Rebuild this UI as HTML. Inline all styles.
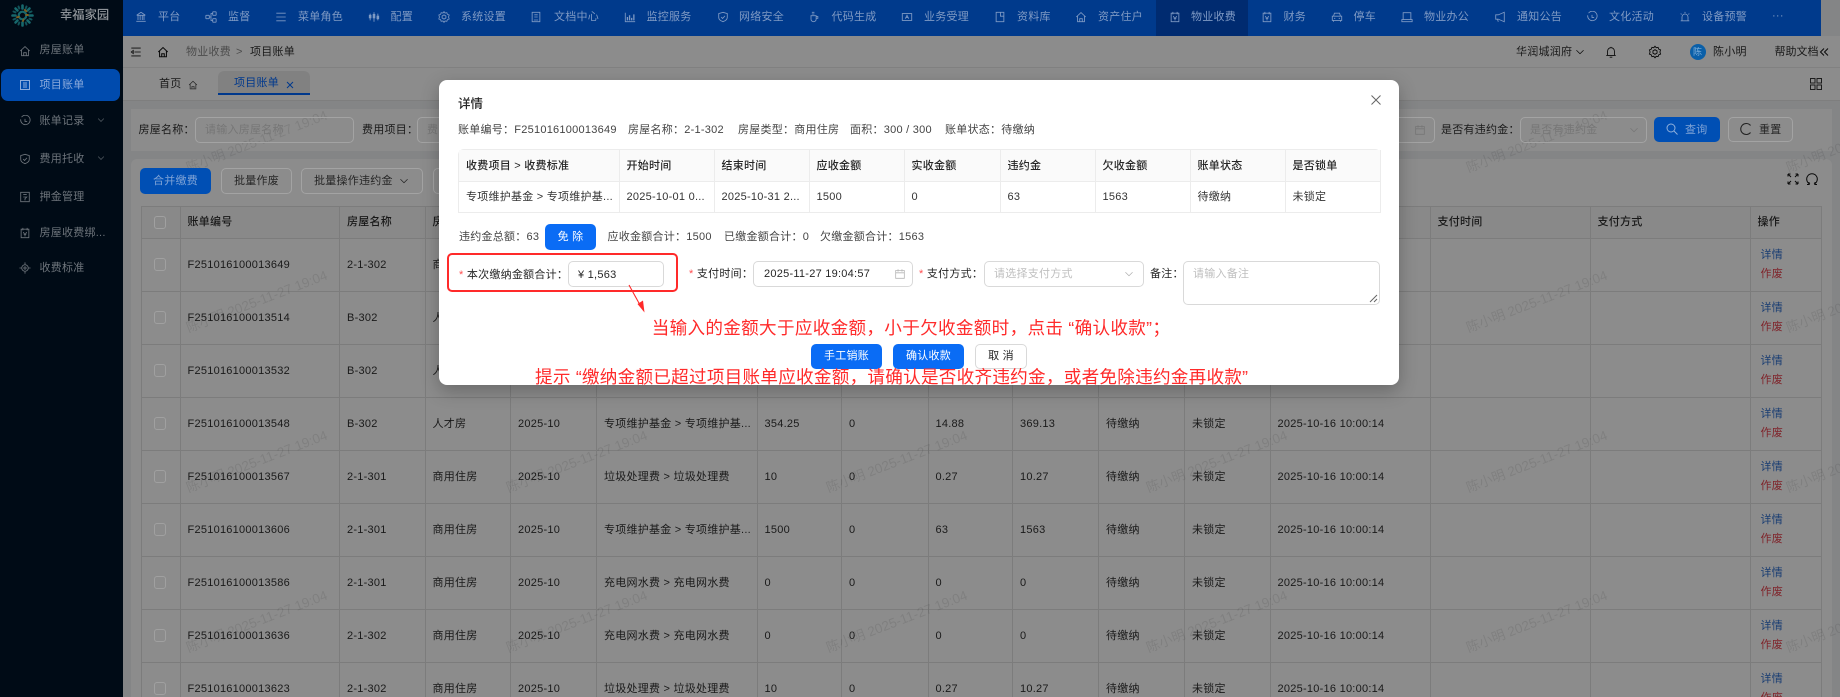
<!DOCTYPE html>
<html lang="zh"><head><meta charset="utf-8"><title>项目账单</title>
<style>
*{box-sizing:border-box}
html,body{margin:0;padding:0;width:1840px;height:697px;overflow:hidden;background:#848484}
#page{position:relative;width:1840px;height:697px;overflow:hidden;background:#f0f2f5;font:11px/16px "Liberation Sans","Noto Sans CJK SC",sans-serif;color:rgba(0,0,0,.82);letter-spacing:.25px}
.a{position:absolute;white-space:nowrap}
.t{position:absolute;white-space:nowrap;transform:translateY(-50%)}
svg.i{position:absolute;fill:none;stroke:currentColor;stroke-width:1;transform:translate(-50%,-50%);overflow:visible}
.up{z-index:11}
#overlay{position:absolute;left:0;top:0;width:1840px;height:697px;background:rgba(0,0,0,.45);z-index:10}
#side{position:absolute;left:0;top:0;width:123px;height:697px;background:#000b16;z-index:11;color:#6d747b;overflow:hidden}
#top{position:absolute;left:123px;top:0;width:1698px;height:36px;background:#003a8c;z-index:11}
#topw{position:absolute;left:0;top:0;width:1840px;height:36px;z-index:11;color:#7f9ac4}
.in{position:absolute;border:1px solid #a3a3a3;border-radius:5px;z-index:11}
.ph{color:#767676;position:absolute;white-space:nowrap;transform:translateY(-50%);z-index:11}
.btn{position:absolute;border:1px solid #a3a3a3;border-radius:5px;text-align:center;line-height:24px;z-index:11;color:#262626;white-space:nowrap}
.blue{background:#004fb4;border-color:#004fb4;color:#7fa3d6}
#main th,#main td{padding:0 0 0 7px;border-right:1px solid #e2e2e2;border-bottom:1px solid #e2e2e2;text-align:left;white-space:nowrap;overflow:hidden}
table{border-collapse:separate;border-spacing:0;table-layout:fixed}
#main{position:absolute;left:141px;top:206px;width:1680px;background:#fff;border-top:1px solid #e2e2e2;border-left:1px solid #e2e2e2}
#main th{height:31.5px;background:#fafafa;font-weight:500}
#main td{height:53px}
#main td:last-child{padding-left:10px}
#main th:last-child{padding-left:7px}
.cb{display:block;width:12px;height:13px;border:1px solid #a0a0a0;border-radius:3px;margin-left:5px;position:relative;z-index:11}
.d{display:block;line-height:19px;color:#2f6fd0}
.z{display:block;line-height:19px;color:#e8424e}
.wm{position:absolute;white-space:nowrap;font-size:13.5px;color:rgba(0,0,0,.09);transform:translate(-50%,-50%) rotate(-21deg);letter-spacing:0}
#modal{position:absolute;left:439px;top:80px;width:960px;height:305px;background:#fff;border-radius:8px;z-index:20;box-shadow:0 6px 18px rgba(0,0,0,.25);color:#262626}
#mt{position:absolute;left:19px;top:69px;width:922px;border-top:1px solid #ececec;border-left:1px solid #ececec;border-radius:6px 6px 0 0}
#mt th,#mt td{padding:0 0 0 7px;border-right:1px solid #ececec;border-bottom:1px solid #ececec;text-align:left;white-space:nowrap;overflow:hidden}
#mt th{height:32px;background:#fafafa;font-weight:500}
#mt td{height:31px;color:#333}
.mi{position:absolute;border:1px solid #d9d9d9;border-radius:5px;background:#fff}
.mb{position:absolute;top:264px;width:71px;height:25px;background:#0a6cf5;color:#fff;border-radius:5px;text-align:center;line-height:25px}
.lab{color:#262626}
.star{color:#ff4d4f}
.red{position:absolute;white-space:nowrap;color:#ff2a2a;font-size:17.6px;line-height:22px;transform:translateY(-50%)}
</style></head><body>
<div id="page">

<svg width="0" height="0" style="position:absolute"><defs>
<symbol id="bank" viewBox="0 0 14 14"><path d="M2 5h10M7 1.500 2 5M7 1.500 12 5M3.500 5v5.500M6 5v5.500M8.500 5v5.500M10.500 5v5.500M1.500 12h11"/></symbol>
<symbol id="net" viewBox="0 0 14 14"><rect x="1" y="5" width="4" height="4" rx=".5"/><rect x="9" y="1" width="4" height="4" rx=".5"/><rect x="9" y="9" width="4" height="4" rx=".5"/><path d="M5 7h2V3h2M7 7v4h2"/></symbol>
<symbol id="list" viewBox="0 0 14 14"><path d="M1.500 2.500h11M1.500 7h11M1.500 11.500h11"/></symbol>
<symbol id="sl" viewBox="0 0 14 14"><path d="M2.500 3v8M7 1.500v11M11.500 3v8"/><rect x="1.500" y="5" width="2" height="3" fill="currentColor"/><rect x="6" y="4" width="2" height="4" fill="currentColor"/><rect x="10.500" y="6" width="2" height="3" fill="currentColor"/></symbol>
<symbol id="gear" viewBox="0 0 14 14"><path d="M7 .8 8.300 2.400 10.300 2 11 3.900 13 4.700 12.300 7 13 9.300 11 10.100 10.300 12 8.300 11.600 7 13.200 5.700 11.600 3.700 12 3 10.100 1 9.300 1.700 7 1 4.700 3 3.900 3.700 2 5.700 2.400Z"/><path d="M7 4.500 9.200 5.800V8.200L7 9.500 4.800 8.200V5.800Z"/></symbol>
<symbol id="doc" viewBox="0 0 14 14"><path d="M2.500 1.500h9v11h-9zM5 4.500h4M5 7h4M4.500 10.500h5"/></symbol>
<symbol id="chart" viewBox="0 0 14 14"><path d="M1.500 2v10.500H13"/><path d="M4 11V7M6.500 11V5M9 11V8M11.500 11V4" stroke-width="1.500"/></symbol>
<symbol id="shield" viewBox="0 0 14 14"><path d="M7 1.500 12 3v4.500c0 2.500-2.500 4.200-5 5-2.500-.8-5-2.500-5-5V3z"/><path d="m4.800 7 1.700 1.700 2.800-3"/></symbol>
<symbol id="cup" viewBox="0 0 14 14"><path d="M3.500 5.500h6v4a3 3 0 0 1-6 0zM9.500 6.500h2v2h-2M4.500 1.500h3M4.500 3.500h3"/></symbol>
<symbol id="card" viewBox="0 0 14 14"><path d="M1.500 3h11v8h-11zM1 3h12M5 9l2-4 2 4M5.800 7.500h2.400"/></symbol>
<symbol id="book" viewBox="0 0 14 14"><path d="M2.500 1.500h9v11h-9zM7.500 1.500v4.500h4"/></symbol>
<symbol id="home" viewBox="0 0 14 14"><path d="M1.500 7 7 1.800 12.500 7M3 6v6.500h8V6M5.500 12.500V9h3v3.500"/></symbol>
<symbol id="v" viewBox="0 0 14 14"><path d="M2.500 2.500h9v10h-9zM4.500 1v3M9.500 1v3M5 6l2 3 2-3M7 9v2M5.500 8.500h3"/></symbol>
<symbol id="car" viewBox="0 0 14 14"><path d="M3 6 4 2.500h6L11 6M1.500 6h11v5h-11zM3 11v1.500M11 11v1.500M3.500 8.500h1.500M9 8.500h1.500"/></symbol>
<symbol id="pc" viewBox="0 0 14 14"><path d="M2.500 2h9v8h-9zM1 10h12v2.500H1z"/></symbol>
<symbol id="mega" viewBox="0 0 14 14"><path d="M12 1.500v11L5 9.500H2v-5h3z"/><path d="M4 9.500 5 12.500"/></symbol>
<symbol id="clock" viewBox="0 0 14 14"><path d="M3 2.500A5.500 5.500 0 1 1 2 5"/><path d="M7 4.500V7.500h2.500"/></symbol>
<symbol id="alarm" viewBox="0 0 14 14"><path d="M3.500 11.500V7a3.500 3.500 0 0 1 7 0v4.500M2 11.500h10M7 1v1.500M2 3l1 1M12 3l-1 1"/></symbol>
<symbol id="ld" viewBox="0 0 14 14"><path d="M2 1.500h10v11H2zM5 4h4M5 7h4l-2 2v2"/></symbol>
<symbol id="tgt" viewBox="0 0 14 14"><circle cx="7" cy="7" r="3.800"/><circle cx="7" cy="7" r="1.300"/><path d="M7 .5v2.500M7 11v2.500M.5 7H3M11 7h2.500"/></symbol>
<symbol id="chev" viewBox="0 0 14 14"><path d="M2 4.500 7 9.500 12 4.500"/></symbol>
<symbol id="cal" viewBox="0 0 14 14"><path d="M1.500 2.500h11v10h-11zM1.500 5.500h11M4.500 1v3M9.500 1v3"/></symbol>
<symbol id="menu" viewBox="0 0 14 14"><path d="M1 2h12M5 7h8M1 12h12M3.500 5 1 7l2.500 2z"/></symbol>
<symbol id="bell" viewBox="0 0 14 14"><path d="M3 11V6a4 4 0 0 1 8 0v5M1.500 11h11M5.500 13h3M7 1v1"/></symbol>
</defs></svg>

<!-- page background layers -->
<div class="a" style="left:123px;top:36px;width:1717px;height:32px;background:#fff;border-bottom:1px solid #ececec"></div>
<div class="a" style="left:123px;top:68px;width:1717px;height:33px;background:#fff;border-bottom:1px solid #e6e6e6"></div>
<div class="a" style="left:131px;top:109px;width:1701px;height:42px;background:#fff"></div>
<div class="a" style="left:131px;top:159px;width:1701px;height:538px;background:#fff;border-radius:6px 6px 0 0"></div>

<!-- breadcrumb -->
<svg class="i" style="left:136px;top:52px;color:#111" width="11" height="11"><use href="#menu"/></svg>
<svg class="i" style="left:163px;top:52px;color:#111;stroke-width:1.200" width="12" height="12"><use href="#home"/></svg>
<span class="t" style="left:186px;top:52px;color:#8c8c8c">物业收费</span>
<span class="t" style="left:236px;top:52px;color:#8c8c8c">&gt;</span>
<span class="t" style="left:250px;top:52px">项目账单</span>
<span class="t" style="left:1516px;top:52px">华润城润府</span>
<svg class="i" style="left:1580px;top:52px;color:#111" width="10" height="10"><use href="#chev"/></svg>
<svg class="i" style="left:1611px;top:52px;color:#111" width="12" height="12"><use href="#bell"/></svg>
<svg class="i" style="left:1655px;top:52px;color:#111" width="13" height="13"><use href="#gear"/></svg>
<span class="a up" style="left:1689.500px;top:44px;width:16px;height:16px;border-radius:50%;background:#0a5fa8;color:#7fb0dc;font-size:9px;line-height:16px;text-align:center;letter-spacing:0">陈</span>
<span class="t" style="left:1713px;top:52px">陈小明</span>
<span class="t" style="left:1774.500px;top:52px;letter-spacing:0">帮助文档</span>
<svg class="i" style="left:1824px;top:52px;color:#111" width="9" height="9"><path d="M4.500 1 1 4.500l3.500 3.500M8.500 1 5 4.500l3.500 3.500"/></svg>

<!-- tabs -->
<span class="t" style="left:159px;top:84px">首页</span>
<svg class="i" style="left:193px;top:85px;color:#444" width="10" height="10"><use href="#home"/></svg>
<div class="a" style="left:218px;top:71px;width:91.500px;height:24px;background:#ececec;border-radius:6px 6px 0 0;border-bottom:2px solid #0066ff"></div>
<span class="t" style="left:234px;top:83px;color:#0066ff">项目账单</span>
<svg class="i" style="left:290px;top:85px;color:#0066ff" width="6" height="6"><path d="M0 0l6 6M6 0 0 6"/></svg>
<svg class="i" style="left:1815.500px;top:84px;color:#333" width="12" height="12"><path d="M.5.500h4.500v4.500H.5zM7 .5h4.500v4.500H7zM.5 7h4.500v4.500H.5zM7 7h4.500v4.500H7z"/></svg>

<!-- filter -->
<span class="t" style="left:138.500px;top:130px">房屋名称：</span>
<div class="in" style="left:195px;top:117px;width:159px;height:26px"></div>
<span class="ph" style="left:205px;top:130px">请输入房屋名称</span>
<span class="t" style="left:362px;top:130px">费用项目：</span>
<div class="in" style="left:417px;top:117px;width:159px;height:26px"></div>
<span class="ph" style="left:427px;top:130px">费</span>
<div class="in" style="left:1300px;top:117px;width:134.500px;height:26px"></div>
<svg class="i up" style="left:1419.500px;top:130px;color:#767676" width="11" height="11"><use href="#cal"/></svg>
<span class="t" style="left:1441px;top:130px">是否有违约金：</span>
<div class="in" style="left:1520px;top:117px;width:127px;height:26px"></div>
<span class="ph" style="left:1530px;top:130px">是否有违约金</span>
<svg class="i up" style="left:1634px;top:130px;color:#767676" width="10" height="10"><use href="#chev"/></svg>
<div class="btn blue" style="left:1654px;top:117px;width:66px;height:25px"></div>
<svg class="i up" style="left:1672px;top:129px;color:#8fb0dc" width="11" height="11"><circle cx="4.500" cy="4.500" r="4"/><path d="m7.500 7.500 3.500 3.500"/></svg>
<span class="t up" style="left:1685px;top:130px;color:#7fa3d6">查询</span>
<div class="btn" style="left:1728px;top:117px;width:65px;height:25px"></div>
<svg class="i up" style="left:1746px;top:129px;color:#222;stroke-width:1.100" width="11" height="12"><path d="M10 2.500A5.500 5.500 0 1 0 10 9.500"/></svg>
<span class="t up" style="left:1759px;top:130px;color:#262626">重置</span>

<!-- toolbar -->
<div class="btn blue" style="left:140px;top:168px;width:71px;height:26px">合并缴费</div>
<div class="btn" style="left:221px;top:168px;width:71px;height:26px">批量作废</div>
<div class="btn" style="left:301px;top:168px;width:121.500px;height:26px;text-align:left;padding-left:12px">批量操作违约金</div>
<svg class="i up" style="left:404px;top:181px;color:#222" width="10" height="10"><use href="#chev"/></svg>
<div class="btn" style="left:433px;top:168px;width:80px;height:26px"></div>
<svg class="i" style="left:1793px;top:179px;color:#111" width="11" height="11"><path d="M.5.500 3.500 3.500M.5.500h2.500M.5.500V3M10.500.500 7.500 3.500M10.500.500H8M10.500.500V3M.5 10.500 3.500 7.500M.5 10.500h2.500M.5 10.500V8M10.500 10.500 7.500 7.500M10.500 10.500H8M10.500 10.500V8"/></svg>
<svg class="i" style="left:1812px;top:179px;color:#111" width="11" height="12"><path d="M3.500 11A5.300 5.300 0 1 1 7.500 11M2.500 9v2.500H.5M8.500 9v2.500h2"/></svg>

<!-- main table -->
<table id="main">
<colgroup><col style="width:38.500px"><col style="width:159.500px"><col style="width:85.500px"><col style="width:85.500px"><col style="width:86px"><col style="width:160.500px"><col style="width:84.500px"><col style="width:86.500px"><col style="width:84.500px"><col style="width:86px"><col style="width:86px"><col style="width:85.500px"><col style="width:160px"><col style="width:160px"><col style="width:160px"><col style="width:71.500px"></colgroup>
<tr><th><span class="cb"></span></th><th>账单编号</th><th>房屋名称</th><th>房屋类型</th><th>账期</th><th>收费项目 &gt; 收费标准</th><th>应收金额</th><th>实收金额</th><th>违约金</th><th>欠收金额</th><th>账单状态</th><th>是否锁单</th><th>创建时间</th><th>支付时间</th><th>支付方式</th><th>操作</th></tr>
<tr><td><span class="cb"></span></td><td>F251016100013649</td><td>2-1-302</td><td>商用住房</td><td>2025-10</td><td>专项维护基金 &gt; 专项维护基...</td><td>1500</td><td>0</td><td>63</td><td>1563</td><td>待缴纳</td><td>未锁定</td><td>2025-10-16 10:00:14</td><td></td><td></td><td><span class="d">详情</span><span class="z">作废</span></td></tr>
<tr><td><span class="cb"></span></td><td>F251016100013514</td><td>B-302</td><td>人才房</td><td>2025-10</td><td>专项维护基金 &gt; 专项维护基...</td><td>354.25</td><td>0</td><td>14.88</td><td>369.13</td><td>待缴纳</td><td>未锁定</td><td>2025-10-16 10:00:14</td><td></td><td></td><td><span class="d">详情</span><span class="z">作废</span></td></tr>
<tr><td><span class="cb"></span></td><td>F251016100013532</td><td>B-302</td><td>人才房</td><td>2025-10</td><td>专项维护基金 &gt; 专项维护基...</td><td>354.25</td><td>0</td><td>14.88</td><td>369.13</td><td>待缴纳</td><td>未锁定</td><td>2025-10-16 10:00:14</td><td></td><td></td><td><span class="d">详情</span><span class="z">作废</span></td></tr>
<tr><td><span class="cb"></span></td><td>F251016100013548</td><td>B-302</td><td>人才房</td><td>2025-10</td><td>专项维护基金 &gt; 专项维护基...</td><td>354.25</td><td>0</td><td>14.88</td><td>369.13</td><td>待缴纳</td><td>未锁定</td><td>2025-10-16 10:00:14</td><td></td><td></td><td><span class="d">详情</span><span class="z">作废</span></td></tr>
<tr><td><span class="cb"></span></td><td>F251016100013567</td><td>2-1-301</td><td>商用住房</td><td>2025-10</td><td>垃圾处理费 &gt; 垃圾处理费</td><td>10</td><td>0</td><td>0.27</td><td>10.27</td><td>待缴纳</td><td>未锁定</td><td>2025-10-16 10:00:14</td><td></td><td></td><td><span class="d">详情</span><span class="z">作废</span></td></tr>
<tr><td><span class="cb"></span></td><td>F251016100013606</td><td>2-1-301</td><td>商用住房</td><td>2025-10</td><td>专项维护基金 &gt; 专项维护基...</td><td>1500</td><td>0</td><td>63</td><td>1563</td><td>待缴纳</td><td>未锁定</td><td>2025-10-16 10:00:14</td><td></td><td></td><td><span class="d">详情</span><span class="z">作废</span></td></tr>
<tr><td><span class="cb"></span></td><td>F251016100013586</td><td>2-1-301</td><td>商用住房</td><td>2025-10</td><td>充电网水费 &gt; 充电网水费</td><td>0</td><td>0</td><td>0</td><td>0</td><td>待缴纳</td><td>未锁定</td><td>2025-10-16 10:00:14</td><td></td><td></td><td><span class="d">详情</span><span class="z">作废</span></td></tr>
<tr><td><span class="cb"></span></td><td>F251016100013636</td><td>2-1-302</td><td>商用住房</td><td>2025-10</td><td>充电网水费 &gt; 充电网水费</td><td>0</td><td>0</td><td>0</td><td>0</td><td>待缴纳</td><td>未锁定</td><td>2025-10-16 10:00:14</td><td></td><td></td><td><span class="d">详情</span><span class="z">作废</span></td></tr>
<tr><td><span class="cb"></span></td><td>F251016100013623</td><td>2-1-302</td><td>商用住房</td><td>2025-10</td><td>垃圾处理费 &gt; 垃圾处理费</td><td>10</td><td>0</td><td>0.27</td><td>10.27</td><td>待缴纳</td><td>未锁定</td><td>2025-10-16 10:00:14</td><td></td><td></td><td><span class="d">详情</span><span class="z">作废</span></td></tr>
</table>

<!-- watermarks -->
<span class="wm" style="left:257px;top:142px">陈小明 2025-11-27 19:04</span><span class="wm" style="left:577px;top:142px">陈小明 2025-11-27 19:04</span><span class="wm" style="left:1537px;top:142px">陈小明 2025-11-27 19:04</span><span class="wm" style="left:1857px;top:142px">陈小明 2025-11-27 19:04</span>
<span class="wm" style="left:257px;top:302px">陈小明 2025-11-27 19:04</span><span class="wm" style="left:1537px;top:302px">陈小明 2025-11-27 19:04</span><span class="wm" style="left:1857px;top:302px">陈小明 2025-11-27 19:04</span>
<span class="wm" style="left:257px;top:462px">陈小明 2025-11-27 19:04</span><span class="wm" style="left:577px;top:462px">陈小明 2025-11-27 19:04</span><span class="wm" style="left:897px;top:462px">陈小明 2025-11-27 19:04</span><span class="wm" style="left:1217px;top:462px">陈小明 2025-11-27 19:04</span><span class="wm" style="left:1537px;top:462px">陈小明 2025-11-27 19:04</span><span class="wm" style="left:1857px;top:462px">陈小明 2025-11-27 19:04</span>
<span class="wm" style="left:257px;top:622px">陈小明 2025-11-27 19:04</span><span class="wm" style="left:577px;top:622px">陈小明 2025-11-27 19:04</span><span class="wm" style="left:897px;top:622px">陈小明 2025-11-27 19:04</span><span class="wm" style="left:1217px;top:622px">陈小明 2025-11-27 19:04</span><span class="wm" style="left:1537px;top:622px">陈小明 2025-11-27 19:04</span><span class="wm" style="left:1857px;top:622px">陈小明 2025-11-27 19:04</span>

<div id="overlay"></div>

<!-- top bar -->
<div id="top"></div>
<div class="a" style="left:1156px;top:0;width:92px;height:36px;background:#002b70;z-index:11"></div>
<div id="topw">
<svg class="i" style="left:141px;top:17px" width="12" height="12"><use href="#bank"/></svg><span class="t" style="left:158px;top:17px">平台</span>
<svg class="i" style="left:211px;top:17px" width="12" height="12"><use href="#net"/></svg><span class="t" style="left:228px;top:17px">监督</span>
<svg class="i" style="left:281px;top:17px" width="12" height="12"><use href="#list"/></svg><span class="t" style="left:298px;top:17px">菜单角色</span>
<svg class="i" style="left:374px;top:17px" width="12" height="12"><use href="#sl"/></svg><span class="t" style="left:390.500px;top:17px">配置</span>
<svg class="i" style="left:444px;top:17px" width="12" height="12"><use href="#gear"/></svg><span class="t" style="left:461px;top:17px">系统设置</span>
<svg class="i" style="left:536px;top:17px" width="12" height="12"><use href="#doc"/></svg><span class="t" style="left:554px;top:17px">文档中心</span>
<svg class="i" style="left:629.500px;top:17px" width="12" height="12"><use href="#chart"/></svg><span class="t" style="left:646.500px;top:17px">监控服务</span>
<svg class="i" style="left:723px;top:17px" width="12" height="12"><use href="#shield"/></svg><span class="t" style="left:739px;top:17px">网络安全</span>
<svg class="i" style="left:814px;top:17px" width="12" height="12"><use href="#cup"/></svg><span class="t" style="left:831.500px;top:17px">代码生成</span>
<svg class="i" style="left:907px;top:17px" width="12" height="12"><use href="#card"/></svg><span class="t" style="left:924px;top:17px">业务受理</span>
<svg class="i" style="left:1000px;top:17px" width="12" height="12"><use href="#book"/></svg><span class="t" style="left:1017px;top:17px">资料库</span>
<svg class="i" style="left:1081px;top:17px" width="12" height="12"><use href="#home"/></svg><span class="t" style="left:1098px;top:17px">资产住户</span>
<svg class="i" style="left:1174.500px;top:17px" width="12" height="12"><use href="#v"/></svg><span class="t" style="left:1191px;top:17px">物业收费</span>
<svg class="i" style="left:1266.500px;top:17px" width="12" height="12"><use href="#v"/></svg><span class="t" style="left:1283.500px;top:17px">财务</span>
<svg class="i" style="left:1336.500px;top:17px" width="12" height="12"><use href="#car"/></svg><span class="t" style="left:1353.500px;top:17px">停车</span>
<svg class="i" style="left:1407px;top:17px" width="12" height="12"><use href="#pc"/></svg><span class="t" style="left:1424px;top:17px">物业办公</span>
<svg class="i" style="left:1500px;top:17px" width="12" height="12"><use href="#mega"/></svg><span class="t" style="left:1517px;top:17px">通知公告</span>
<svg class="i" style="left:1592px;top:17px" width="12" height="12"><use href="#clock"/></svg><span class="t" style="left:1609px;top:17px">文化活动</span>
<svg class="i" style="left:1685px;top:17px" width="12" height="12"><use href="#alarm"/></svg><span class="t" style="left:1702px;top:17px">设备预警</span>
<span class="t" style="left:1772px;top:16px">···</span>
</div>

<!-- sidebar -->
<div id="side">
<svg class="a" style="left:11px;top:4px;stroke-linecap:round" width="23" height="23" viewBox="0 0 23 23" fill="none"><circle cx="11.500" cy="11.500" r="3.800" stroke="#17686c" stroke-width="2.200"/><path d="M11.500 1.500v3M11.500 18.500v3M1.500 11.500h3M18.500 11.500h3M4.500 4.500l2 2M16.500 16.500l2 2M18.500 4.500l-2 2M4.500 18.500l2-2" stroke="#17686c" stroke-width="2.600"/><path d="M7.500 2.500 8.300 4.500M15.500 2.500 14.700 4.500M2.500 7.500 4.500 8.300M2.500 15.500 4.500 14.700M20.500 15.500 18.500 14.700M20.500 7.500 18.500 8.300M7.500 20.500 8.300 18.500M15.500 20.500 14.700 18.500" stroke="#125459" stroke-width="2"/><path d="M13.800 6l1.600 1.300M17 11h-1.800M6 13.300l1.800-.5M12 17l.5-1.500" stroke="#7d5f20" stroke-width="1.900"/></svg>
<span class="t" style="left:60px;top:14.500px;font-size:12.300px;font-weight:500;color:#8f9499;letter-spacing:0">幸福家园</span>
<div class="a" style="left:1px;top:69px;width:119px;height:32px;background:#004bae;border-radius:7px"></div>
<svg class="i" style="left:25px;top:51px" width="12" height="12"><use href="#home"/></svg><span class="t" style="left:39.500px;top:50px">房屋账单</span>
<svg class="i" style="left:25px;top:85px;color:#8cabdc" width="12" height="12"><path d="M1.500 1.500h9v9h-9zM4 4h4M4 6h4M4 8h4"/></svg><span class="t" style="left:39.500px;top:85px;color:#8cabdc">项目账单</span>
<svg class="i" style="left:25px;top:121px" width="12" height="12"><use href="#clock"/></svg><span class="t" style="left:39.500px;top:121px">账单记录</span>
<svg class="i" style="left:101px;top:120px" width="8" height="8"><use href="#chev"/></svg>
<svg class="i" style="left:25px;top:159px" width="12" height="12"><use href="#shield"/></svg><span class="t" style="left:39.500px;top:159px">费用托收</span>
<svg class="i" style="left:101px;top:158px" width="8" height="8"><use href="#chev"/></svg>
<svg class="i" style="left:25px;top:197px" width="12" height="12"><use href="#ld"/></svg><span class="t" style="left:39.500px;top:197px">押金管理</span>
<svg class="i" style="left:25px;top:233px" width="12" height="12"><use href="#v"/></svg><span class="t" style="left:39.500px;top:233px">房屋收费绑...</span>
<svg class="i" style="left:25px;top:268px" width="12" height="12"><use href="#tgt"/></svg><span class="t" style="left:39.500px;top:268px">收费标准</span>
</div>

<!-- modal -->
<div id="modal">
<span class="t" style="left:19px;top:24px;font-size:12.500px;font-weight:500;letter-spacing:0">详情</span>
<svg class="i" style="left:937px;top:20px;color:#666" width="9" height="9"><path d="M0 0l9 9M9 0 0 9"/></svg>
<span class="t" style="left:19px;top:50px;color:#444">账单编号：F251016100013649</span>
<span class="t" style="left:189px;top:50px;color:#444">房屋名称：2-1-302</span>
<span class="t" style="left:299px;top:50px;color:#444">房屋类型：商用住房</span>
<span class="t" style="left:411px;top:50px;color:#444">面积：300 / 300</span>
<span class="t" style="left:506px;top:50px;color:#444">账单状态：待缴纳</span>
<table id="mt">
<colgroup><col style="width:160.500px"><col style="width:95px"><col style="width:95px"><col style="width:95px"><col style="width:96px"><col style="width:95px"><col style="width:95px"><col style="width:95px"><col style="width:95.500px"></colgroup>
<tr><th>收费项目 &gt; 收费标准</th><th>开始时间</th><th>结束时间</th><th>应收金额</th><th>实收金额</th><th>违约金</th><th>欠收金额</th><th>账单状态</th><th>是否锁单</th></tr>
<tr><td>专项维护基金 &gt; 专项维护基...</td><td>2025-10-01 0...</td><td>2025-10-31 2...</td><td>1500</td><td>0</td><td>63</td><td>1563</td><td>待缴纳</td><td>未锁定</td></tr>
</table>
<span class="t" style="left:20px;top:157px;color:#444">违约金总额：63</span>
<div class="a" style="left:106px;top:144px;width:51px;height:26px;background:#0a6cf5;border-radius:5px;color:#fff;text-align:center;line-height:26px">免 除</div>
<span class="t" style="left:168.500px;top:157px;color:#444">应收金额合计：1500</span>
<span class="t" style="left:285px;top:157px;color:#444">已缴金额合计：0</span>
<span class="t" style="left:381px;top:157px;color:#444">欠缴金额合计：1563</span>

<div class="a" style="left:8px;top:172.500px;width:231px;height:39px;border:2px solid #ff2a2a;border-radius:5px"></div>
<span class="t lab" style="left:20px;top:195px"><span class="star">*</span> 本次缴纳金额合计：</span>
<div class="mi" style="left:129px;top:181px;width:96px;height:26px"></div>
<span class="t" style="left:139px;top:195px">¥ 1,563</span>
<svg class="a" style="left:190px;top:205px;overflow:visible" width="16" height="28" viewBox="0 0 16 28" fill="none"><path d="M0 0 11 20" stroke="#ff2a2a" stroke-width="1.100"/><path d="M8.500 19 15.500 27.500 14 15.500z" fill="#ff2a2a"/></svg>

<span class="t lab" style="left:250px;top:194px"><span class="star">*</span> 支付时间：</span>
<div class="mi" style="left:314px;top:181px;width:160px;height:26px"></div>
<span class="t" style="left:325px;top:194px">2025-11-27 19:04:57</span>
<svg class="i" style="left:460.500px;top:194px;color:#b5b5b5" width="11" height="11"><use href="#cal"/></svg>

<span class="t lab" style="left:480px;top:194px"><span class="star">*</span> 支付方式：</span>
<div class="mi" style="left:545px;top:181px;width:160px;height:26px"></div>
<span class="t" style="left:555px;top:194px;color:#bfbfbf">请选择支付方式</span>
<svg class="i" style="left:690px;top:194px;color:#b0b0b0" width="10" height="10"><use href="#chev"/></svg>

<span class="t lab" style="left:711px;top:194px">备注：</span>
<div class="mi" style="left:744px;top:181px;width:197px;height:44px"></div>
<span class="t" style="left:754px;top:194px;color:#bfbfbf">请输入备注</span>
<svg class="a" style="left:930px;top:214px;color:#666" width="9" height="9" fill="none" stroke="currentColor"><path d="M1 8 8 1M5 8l3-3"/></svg>

<span class="red" style="left:212.700px;top:248px;letter-spacing:.3px">当输入的金额大于应收金额，小于欠收金额时，点击 “确认收款”；</span>
<div class="mb" style="left:372px">手工销账</div>
<div class="mb" style="left:454px">确认收款</div>
<div class="mb" style="left:536px;width:52px;background:#fff;color:#262626;border:1px solid #d9d9d9;line-height:23px">取 消</div>
<span class="red" style="left:96px;top:297px;letter-spacing:.25px">提示 “缴纳金额已超过项目账单应收金额，请确认是否收齐违约金，或者免除违约金再收款”</span>
</div>
</div>
</body></html>
